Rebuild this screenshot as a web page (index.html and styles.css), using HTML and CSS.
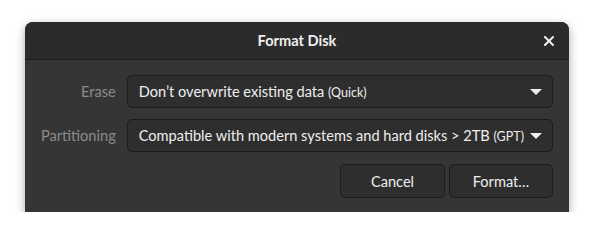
FILE: index.html
```html
<!DOCTYPE html>
<html lang="en">
<head>
    <meta charset="UTF-8">
    <title>Format Disk</title>
    <link rel="stylesheet" href="styles.css">
</head>
<body>

<div class="dialog">
    <div class="headerbar">
        <span class="title">Format Disk</span>
        <span class="close">
            <svg width="10" height="10" viewBox="0 0 10 10"><path d="M1 1 L9 9 M9 1 L1 9" stroke="#eeeeee" stroke-width="2" stroke-linecap="square"/></svg>
        </span>
    </div>
    <div class="content">
        <div class="grid">
            <label class="field-label">Erase</label>
            <div class="combo">
                <span>Don’t overwrite existing data <small>(Quick)</small></span>
                <span class="arrow"></span>
            </div>
            <label class="field-label">Partitioning</label>
            <div class="combo">
                <span>Compatible with modern systems and hard disks &gt; 2TB <small>(GPT)</small></span>
                <span class="arrow"></span>
            </div>
        </div>
        <div class="actions">
            <button class="btn cancel-btn">Cancel</button>
            <button class="btn format-btn">Format…</button>
        </div>
    </div>
</div>

</body>
</html>
```

FILE: styles.css
```css
body {
    margin: 0;
    background-color: #ffffff;
    font-family: Lato, "Noto Sans", sans-serif;
    font-size: 14.6px;
}
.dialog {
    margin: 22px 0 0 25px;
    width: 544px;
    height: 190px;
    background-color: #353535;
    border-radius: 8px 8px 0 0;
    box-shadow: 0 3px 10px rgba(0,0,0,0.35);
    overflow: hidden;
}
.headerbar {
    position: relative;
    height: 37px;
    background-color: #2b2b2b;
    border-bottom: 1px solid #1b1b1b;
    display: flex;
    align-items: center;
    justify-content: center;
}
.title {
    color: #eeeeee;
    font-weight: bold;
}
.close {
    position: absolute;
    right: 15px;
    top: 14px;
    width: 10px;
    height: 10px;
    display: flex;
}
.content {
    padding: 15px 16px 0 16px;
}
.grid {
    display: grid;
    grid-template-columns: auto minmax(0, 1fr);
    column-gap: 11px;
    row-gap: 11px;
    align-items: center;
}
.field-label {
    color: #8b8b8b;
    text-align: right;
    padding-bottom: 1px;
}
.combo {
    min-width: 0;
    height: 31px;
    border: 1px solid #1c1c1c;
    border-radius: 5px;
    background-color: #2e2e2e;
    color: #eeeeee;
    display: flex;
    align-items: center;
    justify-content: space-between;
    padding: 0 10px 0 11px;
    white-space: nowrap;
}
.combo small {
    font-size: 12.5px;
}
.arrow {
    flex-shrink: 0;
    width: 0;
    height: 0;
    border-left: 6px solid transparent;
    border-right: 6px solid transparent;
    border-top: 6px solid #eeeeee;
    margin-left: 5px;
}
.actions {
    display: flex;
    justify-content: flex-end;
    gap: 4px;
    margin-top: 12px;
}
.btn {
    width: 105px;
    height: 34px;
    border: 1px solid #1c1c1c;
    border-radius: 5px;
    background-color: #2e2e2e;
    color: #eeeeee;
    font-family: Lato, "Noto Sans", sans-serif;
    font-size: 14.6px;
}
.format-btn {
    width: 104px;
}
```
